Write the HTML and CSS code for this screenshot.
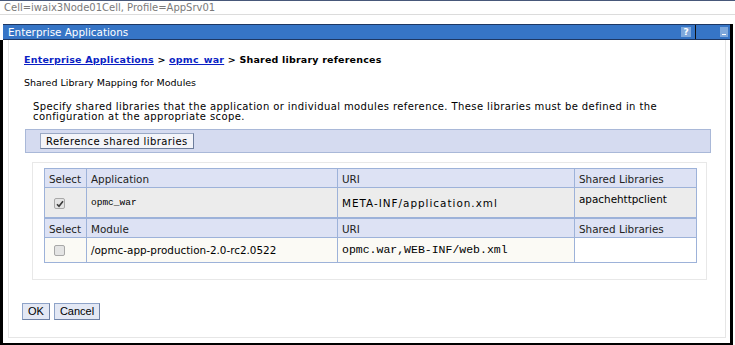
FILE: index.html
```html
<!DOCTYPE html>
<html lang="en">
<head>
    <meta charset="UTF-8">
    <title>Shared library references</title>
    <link rel="stylesheet" href="styles.css">
</head>
<body>

    <div class="cell-bar">Cell=iwaix3Node01Cell, Profile=AppSrv01</div>

    <div class="portlet">
        <div class="title-bar">
            <span class="title">Enterprise Applications</span>
            <span class="tools">
                <span class="help-icon">?</span>
                <span class="tool-sep"></span>
                <span class="min-icon"></span>
            </span>
        </div>

        <div class="portlet-body">
            <div class="inner">
                <div class="crumbs">
                    <a href="#">Enterprise Applications</a> &gt; <a href="#">opmc_war</a> &gt; Shared library references
                </div>
                <div class="subtitle">Shared Library Mapping for Modules</div>

                <p class="desc">Specify shared libraries that the application or individual modules reference. These libraries must be defined in the<br>configuration at the appropriate scope.</p>

                <div class="action-bar">
                    <button class="was-button">Reference shared libraries</button>
                </div>

                <div class="table-box">
                    <table class="map-table">
                        <colgroup>
                            <col class="c-select">
                            <col class="c-name">
                            <col class="c-uri">
                            <col class="c-libs">
                        </colgroup>
                        <tr class="head">
                            <th>Select</th>
                            <th>Application</th>
                            <th>URI</th>
                            <th>Shared Libraries</th>
                        </tr>
                        <tr class="row-app">
                            <td class="sel"><span class="check checked"><svg width="8" height="8" viewBox="0 0 8 8"><path d="M1 4.2 L3 6.3 L7 1.2" fill="none" stroke="#3a3a3a" stroke-width="1.6"/></svg></span></td>
                            <td class="mono small">opmc_war</td>
                            <td class="wide">META-INF/application.xml</td>
                            <td class="top">apachehttpclient</td>
                        </tr>
                        <tr class="head head-2">
                            <th>Select</th>
                            <th>Module</th>
                            <th>URI</th>
                            <th>Shared Libraries</th>
                        </tr>
                        <tr class="row-mod">
                            <td class="sel"><span class="check"></span></td>
                            <td>/opmc-app-production-2.0-rc2.0522</td>
                            <td class="mono">opmc.war,WEB-INF/web.xml</td>
                            <td class="blank"></td>
                        </tr>
                    </table>
                </div>

                <div class="form-buttons">
                    <button class="btn">OK</button>
                    <button class="btn">Cancel</button>
                </div>
            </div>
        </div>
    </div>

</body>
</html>
```

FILE: styles.css
```css
body {
    margin: 0;
    width: 735px;
    height: 345px;
    overflow: hidden;
    background: #fff;
    font-family: "DejaVu Sans", Verdana, sans-serif;
    color: #000;
}

/* barra superior con la celda */
.cell-bar {
    height: 13px;
    border-top: 1px solid #47587a;
    border-bottom: 1px solid #dcdcdc;
    padding-left: 4px;
    font-size: 10px;
    line-height: 13px;
    color: #7a7a7a;
}

.portlet {
    margin-top: 9px;
    width: 730px;
    border-right: 3px solid #000;
}

.title-bar {
    margin-left: 3px;
    height: 14px;
    border-top: 1px solid #1d3763;
    border-bottom: 1px solid #1d3763;
    background: #3675c6;
    display: flex;
    justify-content: space-between;
    align-items: center;
}

.title {
    padding-left: 5px;
    font-size: 10.4px;
    color: #fff;
}

.tools {
    display: flex;
    align-items: center;
    height: 14px;
}

.help-icon {
    width: 10px;
    height: 10px;
    background: #7ea8dc;
    color: #fff;
    font-size: 9px;
    font-weight: bold;
    line-height: 10px;
    text-align: center;
}

.tool-sep {
    width: 1px;
    height: 14px;
    background: #111;
    margin: 0 24px 0 4px;
}

.min-icon {
    width: 8px;
    height: 10px;
    margin-right: 2px;
    background: #7ea8dc;
    position: relative;
}

.min-icon::after {
    content: "";
    position: absolute;
    left: 2px;
    right: 2px;
    bottom: 2px;
    height: 1px;
    background: #fff;
}

.portlet-body {
    border-left: 3px solid #000;
    border-bottom: 2px solid #000;
    padding: 0 4px 5px 5px;
    height: 298px;
}

.inner {
    height: 297px;
    border: 1px solid #e6e6e6;
    border-top: none;
}

.crumbs {
    margin: 0 0 0 15px;
    padding-top: 14px;
    font-size: 9.5px;
    font-weight: bold;
    letter-spacing: 0.2px;
    line-height: 11px;
}

.crumbs a {
    color: #0b1fc4;
}

.subtitle {
    margin: 12px 0 0 15px;
    font-size: 9.5px;
    line-height: 11px;
}

.desc {
    margin: 14px 0 0 24px;
    font-size: 10px;
    letter-spacing: 0.4px;
    line-height: 10px;
}

/* barra de acciones */
.action-bar {
    margin: 7px 0 0 16px;
    width: 670px;
    height: 22px;
    border: 1px solid #a9b8d8;
    background: #d5dbf0;
    display: flex;
    align-items: center;
    padding-left: 14px;
}

.was-button {
    margin: 0;
    height: 16px;
    padding: 0 5px;
    font-family: "DejaVu Sans", Verdana, sans-serif;
    font-size: 10px;
    letter-spacing: 0.4px;
    color: #000;
    background: #f3f4f9;
    border: 1px solid #9aa8c4;
    border-right-color: #6d7d9c;
    border-bottom-color: #6d7d9c;
}

.table-box {
    margin: 9px 0 0 23px;
    width: 650px;
    padding: 5px 12px 16px 11px;
    border: 1px solid #e8e8e8;
}

.map-table {
    width: 652px;
    border-collapse: collapse;
    table-layout: fixed;
    font-size: 10.4px;
}

.c-select { width: 42px; }
.c-name { width: 251px; }
.c-uri { width: 237px; }
.c-libs { width: 122px; }

.map-table th,
.map-table td {
    border: 1px solid #9db2d9;
    padding: 0 4px;
    text-align: left;
    white-space: nowrap;
    overflow: hidden;
}

.map-table th {
    height: 19px;
    background: #dde2f4;
    font-weight: normal;
    color: #222;
    padding-top: 2px;
    box-sizing: border-box;
}

.head-2 th {
    border-top-width: 2px;
}

.row-app td {
    height: 24px;
    background: #ececec;
}

.row-mod td {
    height: 24px;
    background: #fbfaf5;
}

.row-mod td.blank {
    background: #fff;
}

.map-table td.top {
    vertical-align: top;
    padding-top: 5px;
}

.map-table td.wide {
    letter-spacing: 1px;
}

.mono {
    font-family: "Liberation Mono", "Courier New", monospace;
    font-size: 11.5px;
}

.mono.small {
    font-size: 9.5px;
}

.map-table td.sel {
    padding: 0 0 0 9px;
}

.check {
    display: inline-block;
    width: 9px;
    height: 9px;
    border: 1px solid #a8a8a8;
    border-radius: 2px;
    background: #e4e4e4;
    vertical-align: middle;
    line-height: 0;
}

.check svg {
    margin: 1px 0 0 1px;
}

/* botones del formulario */
.form-buttons {
    margin: 23px 0 0 13px;
    display: flex;
    gap: 4px;
}

.btn {
    margin: 0;
    height: 17px;
    padding: 0 5px;
    font-family: "Liberation Sans", Arial, sans-serif;
    font-size: 11px;
    color: #000;
    background: #e3e8f4;
    border: 1px solid #8ea3c8;
    border-right-color: #6f82a6;
    border-bottom-color: #6f82a6;
}
```
